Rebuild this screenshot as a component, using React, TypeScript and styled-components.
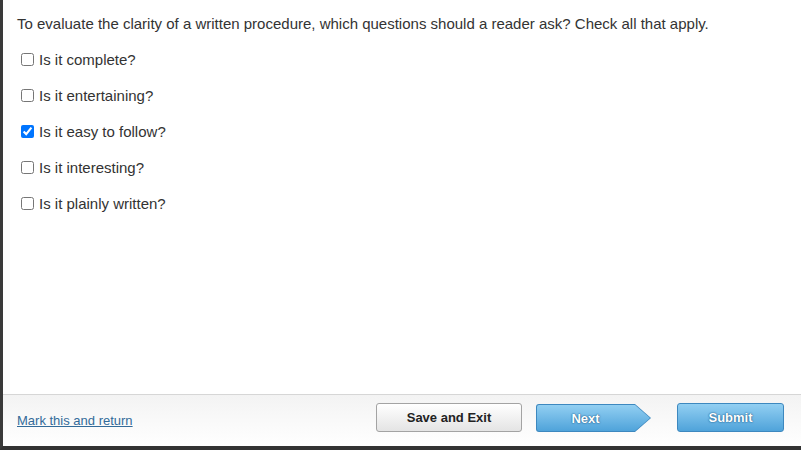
import React, { useState } from "react";
import styled, { createGlobalStyle } from "styled-components";

const Global = createGlobalStyle`
  html, body { margin: 0; padding: 0; background: #ffffff; }
  body { font-family: Arial, "Liberation Sans", sans-serif; }
`;

const Frame = styled.div`
  box-sizing: border-box;
  width: 801px;
  height: 450px;
  display: flex;
  flex-direction: column;
  border-left: 3px solid #3a3a3a;
  border-bottom: 4px solid #333333;
  background: #ffffff;
`;

const Content = styled.main`
  flex: 1;
  padding: 15px 14px 0 14px;
`;

const Question = styled.p`
  margin: 0 0 8px 0;
  font-size: 15px;
  line-height: 18px;
  color: #333333;
`;

const Options = styled.div`
  display: flex;
  flex-direction: column;
`;

const OptionRow = styled.label`
  display: flex;
  align-items: center;
  height: 36px;
  font-size: 15px;
  color: #333333;
  cursor: pointer;
`;

const Check = styled.input`
  width: 13px;
  height: 13px;
  margin: 0 5px 0 4px;
  accent-color: #0075ff;
`;

const Footer = styled.footer`
  box-sizing: border-box;
  height: 52px;
  border-top: 1px solid #d6d6d6;
  background: linear-gradient(#f3f3f3, #ffffff);
  display: flex;
  align-items: flex-start;
  padding: 8px 17px 0 14px;
`;

const MarkLink = styled.a`
  margin-top: 10px;
  font-size: 13px;
  line-height: 15px;
  color: #336b99;
  text-decoration: underline;
  cursor: pointer;
  margin-right: auto;
`;

const SaveButton = styled.button`
  box-sizing: border-box;
  width: 146px;
  height: 29px;
  border: 1px solid #a3a3a3;
  border-radius: 3px;
  background: linear-gradient(#ffffff, #e4e4e4);
  font-family: Arial, "Liberation Sans", sans-serif;
  font-weight: bold;
  font-size: 13px;
  color: #222222;
  cursor: pointer;
  padding: 0;
`;

const arrowShape = `polygon(0 0, calc(100% - 16px) 0, 100% 50%, calc(100% - 16px) 100%, 0 100%)`;

const NextButton = styled.button`
  position: relative;
  box-sizing: border-box;
  width: 115px;
  height: 28px;
  margin: 1px 26px 0 14px;
  border: none;
  border-radius: 3px 0 0 3px;
  padding: 0 16px 0 0;
  background: #3d88bf;
  clip-path: ${arrowShape};
  font-family: Arial, "Liberation Sans", sans-serif;
  font-weight: bold;
  font-size: 13px;
  color: #ffffff;
  text-shadow: 0 0 2px #1f5f8e, 0 0 1px #1f5f8e;
  cursor: pointer;
  &::before {
    content: "";
    position: absolute;
    inset: 1px 1px 1px 1px;
    border-radius: 2px 0 0 2px;
    background: linear-gradient(#92cff2, #4fa3da);
    clip-path: polygon(0 0, calc(100% - 15px) 0, 100% 50%, calc(100% - 15px) 100%, 0 100%);
  }
  span { position: relative; }
`;

const SubmitButton = styled.button`
  box-sizing: border-box;
  width: 107px;
  height: 29px;
  border: 1px solid #3d88bf;
  border-radius: 3px;
  background: linear-gradient(#92cff2, #4fa3da);
  font-family: Arial, "Liberation Sans", sans-serif;
  font-weight: bold;
  font-size: 13px;
  color: #ffffff;
  text-shadow: 0 0 2px #1f5f8e, 0 0 1px #1f5f8e;
  cursor: pointer;
  padding: 0;
`;

const options = [
  "Is it complete?",
  "Is it entertaining?",
  "Is it easy to follow?",
  "Is it interesting?",
  "Is it plainly written?",
];

export default function App() {
  const [checked, setChecked] = useState<boolean[]>([false, false, true, false, false]);
  return (
    <>
      <Global />
      <Frame>
        <Content>
          <Question>
            To evaluate the clarity of a written procedure, which questions should a reader ask? Check all that apply.
          </Question>
          <Options>
            {options.map((o, i) => (
              <OptionRow key={o}>
                <Check
                  type="checkbox"
                  checked={checked[i]}
                  onChange={() =>
                    setChecked((c) => c.map((v, j) => (j === i ? !v : v)))
                  }
                />
                {o}
              </OptionRow>
            ))}
          </Options>
        </Content>
        <Footer>
          <MarkLink>Mark this and return</MarkLink>
          <SaveButton>Save and Exit</SaveButton>
          <NextButton>
            <span>Next</span>
          </NextButton>
          <SubmitButton>Submit</SubmitButton>
        </Footer>
      </Frame>
    </>
  );
}
